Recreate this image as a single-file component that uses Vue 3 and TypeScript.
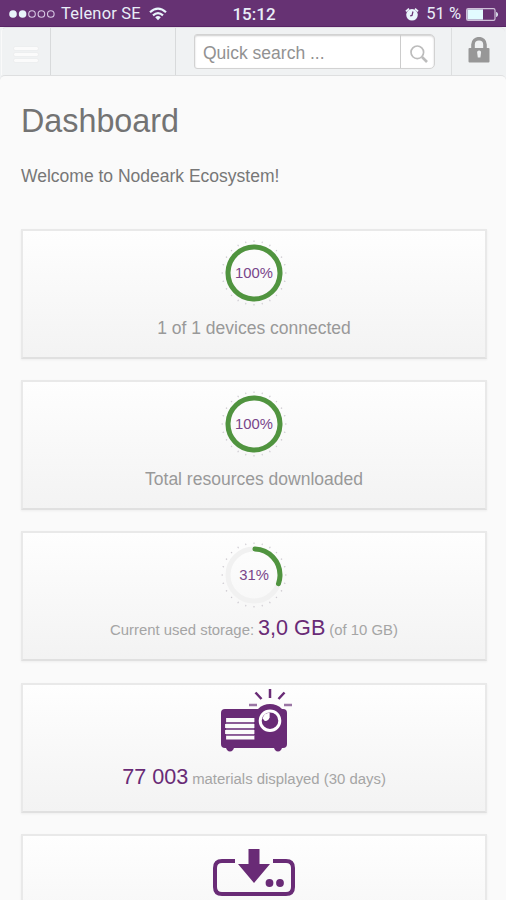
<script setup lang="ts">
interface Card {
  kind: 'gauge' | 'projector' | 'download'
  percent?: number
  before?: string
  value?: string
  after?: string
}

const cards: Card[] = [
  { kind: 'gauge', percent: 100, before: '1 of 1 devices connected' },
  { kind: 'gauge', percent: 100, before: 'Total resources downloaded' },
  { kind: 'gauge', percent: 31, before: 'Current used storage:', value: '3,0 GB', after: '(of 10 GB)' },
  { kind: 'projector', value: '77 003', after: 'materials displayed (30 days)' },
  { kind: 'download' },
]

const ticks = Array.from({ length: 24 }, (_, i) => i * 15)
const circumference = 2 * Math.PI * 26
const dash = (percent: number): string =>
  percent >= 100 ? 'none' : `${(circumference * percent) / 100 - 2} ${circumference}`
</script>

<template>
  <div class="screen">
    <header class="status">
      <div class="carrier">
        <svg class="signal" width="47" height="10" viewBox="0 0 47 10">
          <circle cx="4" cy="5" r="3.8" fill="#e9f5fb" />
          <circle cx="13.6" cy="5" r="3.8" fill="#e9f5fb" />
          <g fill="none" stroke="#d8c9e4" stroke-width="1.1">
            <circle cx="23" cy="5" r="3.3" />
            <circle cx="32.4" cy="5" r="3.3" />
            <circle cx="41.8" cy="5" r="3.3" />
          </g>
        </svg>
        <span class="operator">Telenor SE</span>
        <svg class="wifi" width="18" height="14" viewBox="0 0 18 14">
          <g fill="none" stroke="#e9f5fb" stroke-width="2.2">
            <path d="M1 5.2Q9-2 17 5.2" />
            <path d="M4 8.4Q9 3.8 14 8.4" />
          </g>
          <path d="M6.2 10.2Q9 8 11.8 10.2L9 13.2Z" fill="#e9f5fb" />
        </svg>
      </div>
      <span class="clock">15:12</span>
      <div class="power">
        <svg class="alarm" width="14" height="15" viewBox="0 0 14 15">
          <circle cx="7" cy="7.8" r="5.8" fill="#e9f5fb" />
          <path d="M.9 4.4 4 1.6M13.1 4.4 10 1.6" stroke="#e9f5fb" stroke-width="1.7" />
          <path d="M8 4.5 7 8.4 5.2 8.9" fill="none" stroke="#663273" stroke-width="1.2" />
        </svg>
        <span class="charge">51 %</span>
        <svg width="33" height="13" viewBox="0 0 33 13">
          <rect x=".6" y=".6" width="28.4" height="11.8" rx="1.6" fill="none" stroke="#cfc0d8" stroke-width="1.2" />
          <rect x="1.4" y="1.4" width="15.6" height="10.2" fill="#e2fbff" />
          <path d="M30.2 4c2.3.4 2.3 4.6 0 5z" fill="#e9f5fb" />
        </svg>
      </div>
    </header>

    <nav class="toolbar">
      <button class="menu" aria-label="Menu"><i></i><i></i><i></i></button>
      <div class="spacer"></div>
      <div class="search-area">
        <div class="search">
          <span class="query">Quick search ...</span>
          <span class="go">
            <svg width="20" height="20" viewBox="0 0 20 20" fill="none" stroke="#bcbcbc">
              <circle cx="8.3" cy="8.3" r="6.3" stroke-width="1.7" />
              <path d="m13 13 5 5" stroke-width="2.6" />
            </svg>
          </span>
        </div>
      </div>
      <div class="lock">
        <svg width="22" height="26" viewBox="0 0 22 26">
          <path d="M5 12V7.5a6 5.8 0 0 1 12 0V12" fill="none" stroke="#979797" stroke-width="3.6" />
          <rect x=".5" y="11" width="21" height="14.5" rx="1" fill="#979797" />
          <path d="M9.2 16a2 2 0 1 1 3.8 0l-.6 4.6H9.8z" fill="#eef0f1" />
        </svg>
      </div>
    </nav>

    <main class="page">
      <h1>Dashboard</h1>
      <p class="welcome">Welcome to Nodeark Ecosystem!</p>
      <section class="cards">
        <article v-for="(card, i) in cards" :key="i" class="card" :class="card.kind">
          <div class="figure">
            <svg v-if="card.kind === 'gauge'" width="66" height="66" viewBox="-33 -33 66 66">
              <path v-for="t in ticks" :key="t" d="M0-32.5v1.5" stroke="#c9c5cc" stroke-width="1" :transform="`rotate(${t})`" />
              <circle r="26" fill="none" stroke="#f1f1f1" stroke-width="5" />
              <circle r="26" fill="none" stroke="#50943f" stroke-width="5" stroke-linecap="round" transform="rotate(-88)" :stroke-dasharray="dash(card.percent ?? 0)" />
              <text y="5" text-anchor="middle" class="percent">{{ card.percent }}%</text>
            </svg>

            <svg v-else-if="card.kind === 'projector'" class="projector-icon" width="74" height="66" viewBox="0 0 74 66">
              <g fill="#692b76">
                <rect x="4" y="21" width="66" height="39" rx="4" />
                <circle cx="53" cy="33" r="17" />
                <path d="M8 58h10l-2 4q-3 3-6 0zM56 58h10l-2 4q-3 3-6 0z" />
              </g>
              <path d="M11 32h24.5M10 38h25.5M10 44h25.5M11 49.5h24.5" stroke="#fbfbfb" stroke-width="3.8" stroke-linecap="square" />
              <path d="M9 35h28M9 41h28M9 46.8h28" stroke="#8a5b96" stroke-width="1.8" />
              <circle cx="53" cy="32.7" r="9.8" fill="#692b76" stroke="#fff" stroke-width="3" />
              <path d="M45.6 30.6q1.2-5.6 7-5.8v4.4q-1 4-4.8 3.8z" fill="#fff" />
              <path d="M53 1v9M38.5 4.5l6 6.5M67.5 4.5l-6 6.5" stroke="#692b76" stroke-width="2.5" />
              <path d="M32 17h8M67 17h8" stroke="#9a75a4" stroke-width="2.5" />
            </svg>

            <svg v-else class="download-icon" width="82" height="50" viewBox="0 0 82 50">
              <path d="M22 13H9q-7 0-7 7v19q0 7 7 7h64q7 0 7-7V20q0-7-7-7H60" fill="none" stroke="#692b76" stroke-width="4" />
              <path d="M35.5 1h11v15H57L41 35 25 16h10.5z" fill="#692b76" />
              <circle cx="56.5" cy="35" r="3.9" fill="#692b76" />
              <circle cx="67" cy="35" r="3.9" fill="#692b76" />
            </svg>
          </div>
          <p class="caption" :class="{ detailed: card.value }">
            <span v-if="card.before">{{ card.before }}</span>
            <strong v-if="card.value">{{ card.value }}</strong>
            <span v-if="card.after">{{ card.after }}</span>
          </p>
        </article>
      </section>
    </main>
  </div>
</template>

<style>
body {
  margin: 0;
  overflow: hidden;
}
</style>

<style scoped>
.screen {
  width: 506px;
  height: 900px;
  overflow: hidden;
  display: flex;
  flex-direction: column;
  background: #f0f2f3;
  font-family: "Liberation Sans", Arial, sans-serif;
  color: #777;
}
.status {
  height: 27px;
  flex: none;
  box-sizing: border-box;
  padding: 2px 7px 0 9px;
  display: grid;
  grid-template-columns: 1fr auto 1fr;
  align-items: center;
  background: #663273;
  border-bottom: 1px solid #582465;
  color: #e9eef8;
  white-space: nowrap;
}
.carrier,
.power {
  display: flex;
  align-items: center;
}
.power {
  justify-content: flex-end;
}
.operator {
  margin-left: 5px;
  font: 16.5px/24px Roboto, sans-serif;
  letter-spacing: 0.2px;
}
.wifi {
  margin-left: 8px;
}
.clock {
  font: 500 17px/24px Roboto, sans-serif;
}
.charge {
  margin: 0 5px 0 7px;
  font: 16.5px/24px Roboto, sans-serif;
}
.toolbar {
  height: 48px;
  flex: none;
  display: flex;
  box-sizing: border-box;
  margin: 0 1px;
  border-top: 1px solid #e3e0e6;
  border-left: 1px solid #fafafa;
  border-radius: 5px 5px 0 0;
}
.menu {
  width: 49px;
  padding: 6px 0 0 12px;
  box-sizing: border-box;
  border: 0;
  border-right: 1px solid #d8dadb;
  background: none;
  display: flex;
  flex-direction: column;
  justify-content: center;
  gap: 3px;
}
.menu i {
  width: 24px;
  height: 3px;
  border-radius: 1px;
  background: #fbfbfb;
  box-shadow: 0 0 1px #d4d4d4;
}
.spacer {
  width: 125px;
  box-sizing: border-box;
  border-right: 1px solid #d8dadb;
}
.search-area {
  width: 276px;
  padding: 6px 16px 0 18px;
  box-sizing: border-box;
  border-right: 1px solid #dcdedf;
}
.search {
  height: 35px;
  box-sizing: border-box;
  display: flex;
  border: 1px solid #d2d2d2;
  border-radius: 3px 5px 5px 3px;
  background: #fff;
  box-shadow: inset 0 1px 2px #ccc;
}
.query {
  flex: 1;
  padding-left: 8px;
  font-size: 17.5px;
  line-height: 36px;
  color: #929292;
}
.go {
  width: 34px;
  padding: 5px 0 0 3px;
  box-sizing: border-box;
  display: flex;
  align-items: center;
  justify-content: center;
  border-left: 1px solid #ccc;
}
.lock {
  flex: 1;
  padding: 9px 0 0;
  display: flex;
  justify-content: center;
}
.page {
  flex: 1;
  box-sizing: border-box;
  min-height: 0;
  padding: 25px 19px 0 21px;
  border-top: 1px solid #dedfe0;
  border-radius: 5px 5px 0 0;
  background: #fafafa;
}
h1 {
  margin: 0;
  font-size: 32.3px;
  font-weight: 400;
  line-height: 40px;
  color: #737373;
}
.welcome {
  margin: 24px 0 42px;
  font-size: 17.5px;
  line-height: 22px;
  color: #777;
}
.cards {
  display: flex;
  flex-direction: column;
  gap: 21.2px;
}
.card {
  height: 130px;
  flex: none;
  box-sizing: border-box;
  border: 2px solid #e9e9e9;
  border-bottom-color: #e0e0e0;
  background: linear-gradient(#fefefe, #f3f3f3);
  box-shadow: 0 1px 2px #eee;
}
.figure {
  height: 84px;
  padding-top: 9px;
  box-sizing: border-box;
  display: flex;
  justify-content: center;
  align-items: flex-start;
}
.projector-icon {
  overflow: visible;
  margin-top: -6px;
}
.download-icon {
  margin-top: 3px;
}
.percent {
  font-size: 14.8px;
  fill: #79458a;
}
.caption {
  margin: 1px 0 0;
  display: flex;
  justify-content: center;
  align-items: baseline;
  gap: 4px;
  white-space: nowrap;
  font-size: 17.5px;
  line-height: 24px;
  color: #999;
}
.caption.detailed {
  margin-top: -1px;
  font-size: 14.9px;
  color: #a5a5a5;
}
.projector .caption {
  margin-top: -4px;
}
.caption strong {
  font-size: 21.6px;
  font-weight: 400;
  color: #692b76;
}
</style>
